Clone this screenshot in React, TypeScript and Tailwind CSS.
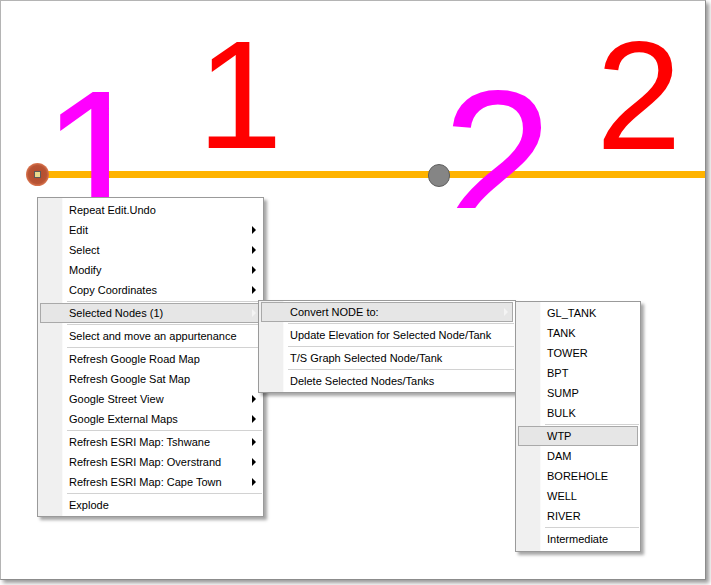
import React from "react";

type Entry =
  | { label: string; arrow?: boolean; active?: boolean; sub?: React.ReactNode }
  | "sep";

const menuBox =
  "absolute flex flex-col border border-[#9a9a9a] bg-[linear-gradient(to_right,#f0f0f0_0,#f0f0f0_24px,#fafafa_24px,#fafafa_25px,#ffffff_25px)] shadow-[3px_3px_3px_rgba(0,0,0,0.35)] text-[11px] text-black";

function MenuRows({ items }: { items: Entry[] }) {
  return (
    <>
      {items.map((it, i) =>
        it === "sep" ? (
          <div key={i} className="h-[3px] flex items-center pl-[29px] pr-[1px]">
            <div className="h-px flex-1 bg-[#d2d2d2]" />
          </div>
        ) : (
          <div
            key={i}
            className={
              it.active
                ? "relative mx-[2px] h-[20px] flex items-center border border-[#a9a9a9] bg-[#e6e6e6] pl-[28px] pr-[4px]"
                : "relative mx-[2px] h-[20px] flex items-center border border-transparent pl-[28px] pr-[4px]"
            }
          >
            <span className="flex-1 whitespace-nowrap">{it.label}</span>
            {it.arrow && (
              <span
                className={
                  it.active
                    ? "w-0 h-0 border-y-[4px] border-y-transparent border-l-[4px] border-l-[#f4f4f4]"
                    : "w-0 h-0 border-y-[4px] border-y-transparent border-l-[4px] border-l-black"
                }
              />
            )}
            {it.sub}
          </div>
        )
      )}
    </>
  );
}

const typeItems: Entry[] = [
  { label: "GL_TANK" },
  { label: "TANK" },
  { label: "TOWER" },
  { label: "BPT" },
  { label: "SUMP" },
  { label: "BULK" },
  "sep",
  { label: "WTP", active: true },
  { label: "DAM" },
  { label: "BOREHOLE" },
  { label: "WELL" },
  { label: "RIVER" },
  "sep",
  { label: "Intermediate" },
];

const nodeItems: Entry[] = [
  {
    label: "Convert NODE to:",
    arrow: true,
    active: true,
    sub: (
      <div className={menuBox + " left-[calc(100%+3px)] top-[-2px] w-[126px] pt-[1px] pb-[2px]"}>
        <MenuRows items={typeItems} />
      </div>
    ),
  },
  "sep",
  { label: "Update Elevation for Selected Node/Tank" },
  "sep",
  { label: "T/S Graph Selected Node/Tank" },
  "sep",
  { label: "Delete Selected Nodes/Tanks" },
];

const mainItems: Entry[] = [
  { label: "Repeat Edit.Undo" },
  { label: "Edit", arrow: true },
  { label: "Select", arrow: true },
  { label: "Modify", arrow: true },
  { label: "Copy Coordinates", arrow: true },
  "sep",
  {
    label: "Selected Nodes (1)",
    arrow: true,
    active: true,
    sub: (
      <div className={menuBox + " left-[calc(100%-2px)] top-[-4px] w-[258px] pt-[1px] pb-[1px]"}>
        <MenuRows items={nodeItems} />
      </div>
    ),
  },
  "sep",
  { label: "Select and move an appurtenance" },
  "sep",
  { label: "Refresh Google Road Map" },
  { label: "Refresh Google Sat Map" },
  { label: "Google Street View", arrow: true },
  { label: "Google External Maps", arrow: true },
  "sep",
  { label: "Refresh ESRI Map: Tshwane", arrow: true },
  { label: "Refresh ESRI Map: Overstrand", arrow: true },
  { label: "Refresh ESRI Map: Cape Town", arrow: true },
  "sep",
  { label: "Explode" },
];

export default function App() {
  return (
    <div className="w-[711px] h-[585px] bg-white font-['Liberation_Sans',Arial,sans-serif]">
      <div className="relative w-[706px] h-[580px] overflow-hidden border border-[#b4b4b4] border-r-[#8c8c8c] border-b-[#8c8c8c] bg-white shadow-[3px_3px_4px_rgba(0,0,0,0.4)]">
        {/* map labels and pipe */}
        <span className="absolute left-[196px] top-[17px] text-[154px] leading-none text-[#ff0000]">1</span>
        <span className="absolute left-[595px] top-[18px] text-[154px] leading-none text-[#ff0000]">2</span>

        <div className="absolute left-[38px] top-[170px] w-[670px] h-[7px] bg-[#ffb300]" />

        <div className="absolute left-0 top-0 w-[706px] h-[207px] overflow-hidden">
          <span className="absolute left-[40px] top-[60px] text-[200px] leading-none text-[#ff00ff]">1</span>
          <span className="absolute left-[441px] top-[60px] text-[200px] leading-none text-[#ff00ff]">2</span>
        </div>

        {/* nodes */}
        <div className="absolute left-[25px] top-[162px] w-[23px] h-[23px] rounded-full bg-[radial-gradient(circle,#b24a2c_0,#b85434_55%,#f08a60_80%,#fbc7b0_100%)] flex items-center justify-center">
          <div className="w-[7px] h-[7px] bg-[#e9d98c] border border-[#5a5a5a]" />
        </div>
        <div className="absolute left-[427px] top-[163px] w-[22px] h-[23px] rounded-full bg-[#858585] border border-[#5e5e5e]" />

        {/* context menu */}
        <div className={menuBox + " left-[36px] top-[196px] w-[227px] pt-[2px] pb-[1px]"}>
          <MenuRows items={mainItems} />
        </div>
      </div>
    </div>
  );
}
